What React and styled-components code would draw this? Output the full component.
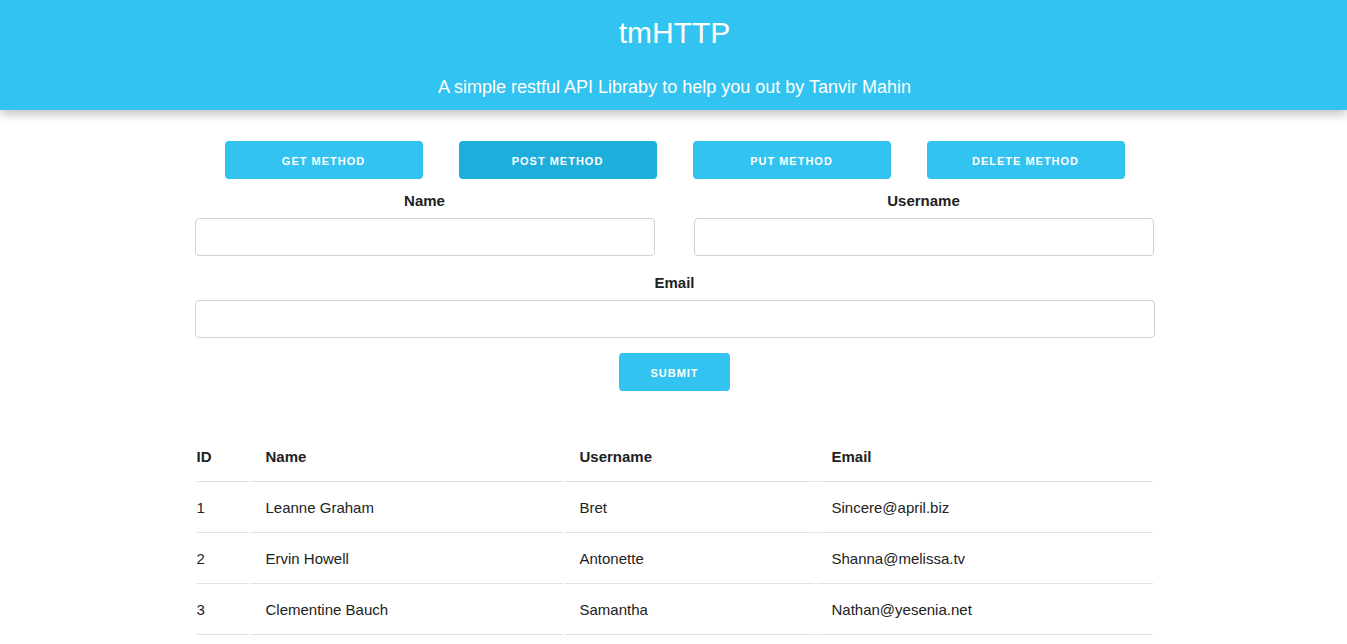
import React from 'react';
import styled, { createGlobalStyle } from 'styled-components';

const GlobalStyle = createGlobalStyle`
  body {
    margin: 0;
    font-family: "Liberation Sans", Arial, sans-serif;
    color: #222;
    background: #fff;
  }
`;

const users = [
  { id: 1, name: 'Leanne Graham', username: 'Bret', email: 'Sincere@april.biz' },
  { id: 2, name: 'Ervin Howell', username: 'Antonette', email: 'Shanna@melissa.tv' },
  { id: 3, name: 'Clementine Bauch', username: 'Samantha', email: 'Nathan@yesenia.net' },
];

const methods = ['Get Method', 'Post Method', 'Put Method', 'Delete Method'];

function App() {
  return <>
    <GlobalStyle />
    <Header>
      <Title>tmHTTP</Title>
      <Subtitle>A simple restful API Libraby to help you out by Tanvir Mahin</Subtitle>
    </Header>
    <Container>
      <MethodBar>
        {methods.map(m => (
          <MethodButton key={m} $active={m === 'Post Method'}>{m}</MethodButton>
        ))}
      </MethodBar>
      <Form onSubmit={e => e.preventDefault()}>
        <FieldRow>
          <Field>
            <Label htmlFor="name">Name</Label>
            <Input id="name" type="text" />
          </Field>
          <Field>
            <Label htmlFor="username">Username</Label>
            <Input id="username" type="text" />
          </Field>
        </FieldRow>
        <Field>
          <Label htmlFor="email">Email</Label>
          <Input id="email" type="email" />
        </Field>
        <SubmitButton type="submit">Submit</SubmitButton>
      </Form>
      <Table>
        <thead>
          <tr>
            <Th $w={52}>ID</Th>
            <Th $w={312}>Name</Th>
            <Th $w={250}>Username</Th>
            <Th>Email</Th>
          </tr>
        </thead>
        <tbody>
          {users.map(u => (
            <tr key={u.id}>
              <Td>{u.id}</Td>
              <Td>{u.name}</Td>
              <Td>{u.username}</Td>
              <Td>{u.email}</Td>
            </tr>
          ))}
        </tbody>
      </Table>
    </Container>
  </>;
}

const Header = styled.header`
  height: 110px;
  background-color: #33c3f0;
  color: #fff;
  text-align: center;
  box-shadow: 0 4px 10px rgba(0, 0, 0, 0.25);
  display: flex;
  flex-direction: column;
  align-items: center;
  padding-left: 2px;
`;

const Title = styled.h1`
  margin: 14px 0 0;
  font-size: 30px;
  font-weight: 400;
  line-height: 38px;
`;

const Subtitle = styled.p`
  margin: 23px 0 0;
  font-size: 18px;
  line-height: 24px;
`;

const Container = styled.main`
  width: 960px;
  margin: 0 auto;
  padding: 31px 0 0 2px;
`;

const MethodBar = styled.div`
  display: flex;
  justify-content: center;
  gap: 36px;
  margin-bottom: 10px;
`;

const buttonBase = `
  height: 38px;
  padding: 1px 30px 0;
  border: none;
  border-radius: 4px;
  color: #fff;
  font-family: "Liberation Sans", Arial, sans-serif;
  font-size: 11px;
  font-weight: 700;
  letter-spacing: 1px;
  text-transform: uppercase;
  cursor: pointer;
`;

const MethodButton = styled.button`
  ${buttonBase}
  width: 198px;
  background-color: ${props => props.$active ? '#1eaedb' : '#33c3f0'};
`;

const Form = styled.form`
  display: flex;
  flex-direction: column;
  align-items: center;
`;

const FieldRow = styled.div`
  width: 100%;
  display: flex;
  gap: 39px;
`;

const Field = styled.div`
  width: 100%;
  display: flex;
  flex-direction: column;
  margin-bottom: 15px;

  ${FieldRow} & {
    width: 460px;
  }
`;

const Label = styled.label`
  text-align: center;
  font-size: 15px;
  font-weight: 700;
  line-height: 24px;
  margin-bottom: 5px;
`;

const Input = styled.input`
  box-sizing: border-box;
  width: 100%;
  height: 38px;
  padding: 6px 10px;
  border: 1px solid #d1d1d1;
  border-radius: 4px;
  background: #fff;
  font-size: 15px;
`;

const SubmitButton = styled.button`
  ${buttonBase}
  width: 111px;
  background-color: #33c3f0;
`;

const Table = styled.table`
  width: 960px;
  margin-top: 40px;
  border-spacing: 2px;
  font-size: 15px;
  line-height: 24px;
`;

const Th = styled.th`
  width: ${props => props.$w ? `${props.$w}px` : 'auto'};
  text-align: left;
  font-weight: 700;
  padding: 12px 15px;
  border-bottom: 1px solid #e1e1e1;
  box-sizing: border-box;

  &:first-child { padding-left: 0; }
`;

const Td = styled.td`
  padding: 12px 15px;
  border-bottom: 1px solid #e1e1e1;

  &:first-child { padding-left: 0; }
`;

export default App;
